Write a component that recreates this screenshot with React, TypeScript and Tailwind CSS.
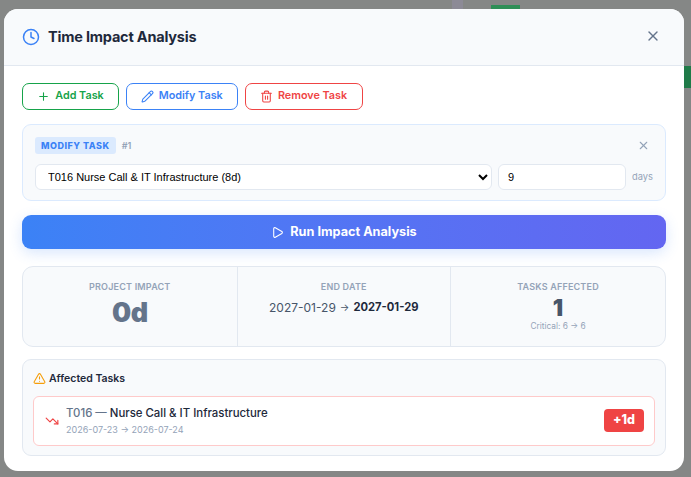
import { Clock, Pencil, Play, Plus, Trash2, TrendingDown, TriangleAlert, X } from "lucide-react";

const ACTIONS = [
  { icon: Plus, label: "Add Task", cls: "w-[97px] border-[#16a34a] text-[#16a34a]" },
  { icon: Pencil, label: "Modify Task", cls: "w-[111.5px] border-[#3b82f6] text-[#3b82f6]" },
  { icon: Trash2, label: "Remove Task", cls: "w-[118px] border-[#ef4444] text-[#ef4444]" },
];

export default function App() {
  return (
    <div className="relative flex h-[477px] w-[691px] items-start overflow-hidden bg-[#858786] pl-[4px] pt-[9px] font-['Inter',sans-serif]">
      {/* blurred page behind the modal */}
      <div className="absolute left-[491px] top-[5px] h-[4px] w-[29px] bg-[#2f8f57]" />
      <div className="absolute left-[452px] top-0 h-[9px] w-[11px] bg-[#8c8a96]" />
      <div className="absolute left-[684px] top-[66px] h-[22px] w-[7px] bg-[#1f7a48]" />

      <div className="relative flex h-[462px] w-[680px] flex-col overflow-hidden rounded-[14px] bg-white">
        {/* Header */}
        <div className="flex h-[57px] shrink-0 items-center justify-between border-b border-[#e2e8f0] bg-[#f8fafc] pl-[18px] pr-[23px]">
          <div className="flex items-center gap-2">
            <Clock className="h-[18px] w-[18px] text-[#3b82f6]" />
            <h2 className="text-[14.5px] font-bold tracking-[-0.2px] text-[#1e293b]">Time Impact Analysis</h2>
          </div>
          <X className="mb-[2px] h-[16px] w-[16px] text-[#64748b]" />
        </div>

        <div className="flex flex-col px-[18px] pt-[17px]">
          {/* Action buttons */}
          <div className="flex gap-[7px]">
            {ACTIONS.map(({ icon: Icon, label, cls }) => (
              <button
                key={label}
                className={`flex h-[27px] items-center justify-center gap-[5px] rounded-[7px] border bg-white text-[10.8px] font-semibold ${cls}`}
              >
                <Icon className="h-[13px] w-[13px]" />
                {label}
              </button>
            ))}
          </div>

          {/* Modify panel */}
          <div className="relative mt-[14px] h-[77px] rounded-[9px] border border-[#dbeafe] bg-[#f8fafc] px-3 pt-[12px]">
            <div className="flex items-center gap-[6px]">
              <span className="flex h-[17px] items-center rounded-[3px] bg-[#dbeafe] px-[6px] text-[9px] font-extrabold tracking-[0.5px] text-[#3b82f6]">
                MODIFY TASK
              </span>
              <span className="text-[9px] font-semibold text-[#94a3b8]">#1</span>
              <X className="ml-auto mr-[3px] h-[13px] w-[13px] text-[#94a3b8]" />
            </div>
            <div className="mt-[10px] flex items-center gap-[6px]">
              <select className="h-[25.5px] w-[457px] rounded-[6px] border border-[#e2e8f0] bg-white pl-2 font-['Liberation_Sans',sans-serif] text-[11px] text-black">
                <option>T016 Nurse Call &amp; IT Infrastructure (8d)</option>
              </select>
              <input
                readOnly
                value="9"
                className="h-[25.5px] w-[128px] rounded-[6px] border border-[#e2e8f0] bg-white px-[9px] font-['Liberation_Sans',sans-serif] text-[11px] text-black"
              />
              <span className="text-[9.3px] text-[#94a3b8]">days</span>
            </div>
          </div>

          {/* Run */}
          <button className="mt-[14px] flex h-[34px] items-center justify-center gap-[6px] rounded-[9px] bg-gradient-to-r from-[#3b82f6] to-[#6366f1] text-[12.7px] font-bold text-white shadow-[0_4px_14px_rgba(59,130,246,0.2)]">
            <Play className="h-[13px] w-[13px]" />
            Run Impact Analysis
          </button>

          {/* Stats */}
          <div className="mt-[17px] grid h-[81px] grid-cols-[213.5px_214.5px_1fr] rounded-[11px] border border-[#e2e8f0] bg-[#f8fafc]">
            <div className="flex flex-col items-center pt-[13px]">
              <div className="text-[9px] font-semibold tracking-[0.2px] text-[#94a3b8]">PROJECT IMPACT</div>
              <div className="mt-[4px] text-[27px] font-black leading-[30px] tracking-[-0.5px] text-[#64748b]">0d</div>
            </div>
            <div className="flex flex-col items-center border-x border-[#e2e8f0] pt-[13px]">
              <div className="text-[9px] font-semibold tracking-[0.2px] text-[#94a3b8]">END DATE</div>
              <div className="mt-[5px] flex items-center gap-[4px] text-[12px] text-[#475569]">
                2027-01-29
                <span className="text-[10px]">→</span>
                <span className="text-[11.2px] font-bold text-[#1e293b]">2027-01-29</span>
              </div>
            </div>
            <div className="flex flex-col items-center pt-[13px]">
              <div className="text-[9px] font-semibold tracking-[0.2px] text-[#94a3b8]">TASKS AFFECTED</div>
              <div className="mt-[2px] text-[23px] font-black leading-[24px] text-[#475569]">1</div>
              <div className="text-[8.3px] text-[#94a3b8]">Critical: 6 → 6</div>
            </div>
          </div>

          {/* Affected tasks */}
          <div className="mt-[12px] h-[97px] rounded-[9px] border border-[#e2e8f0] bg-[#f8fafc] px-[10px] pt-[11px]">
            <div className="flex items-center gap-[3px] text-[10.5px] font-semibold text-[#1e293b]">
              <TriangleAlert className="h-[13px] w-[13px] text-[#f59e0b]" />
              Affected Tasks
            </div>
            <div className="mt-[9px] flex h-[50px] items-center rounded-[6px] border border-[#fecaca] bg-white pl-[11px] pr-[10px]">
              <TrendingDown className="h-[14px] w-[14px] text-[#ef4444]" />
              <div className="ml-[7px]">
                <div className="text-[11.4px] font-medium leading-[15px] text-[#1e293b]">
                  <span className="text-[#64748b]">T016 — </span>Nurse Call &amp; IT Infrastructure
                </div>
                <div className="mt-[2px] text-[9px] text-[#94a3b8]">2026-07-23 → 2026-07-24</div>
              </div>
              <span className="ml-auto flex h-[23px] w-[40px] items-center justify-center rounded-[4px] bg-[#ef4444] text-[12.5px] font-extrabold text-white">
                +1d
              </span>
            </div>
          </div>
        </div>
      </div>
    </div>
  );
}
